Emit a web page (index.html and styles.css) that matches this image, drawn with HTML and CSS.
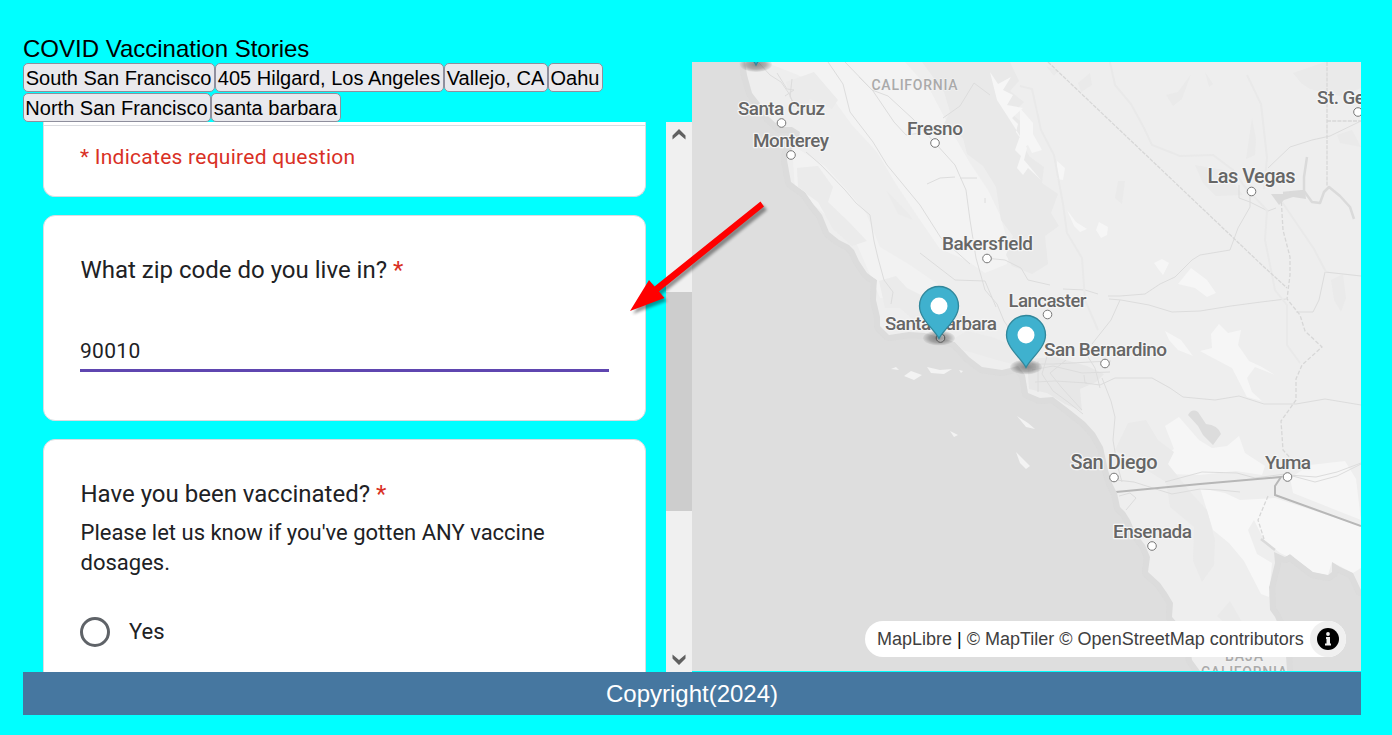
FILE: index.html
```html
<!DOCTYPE html>
<html lang="en">
<head>
<meta charset="utf-8">
<title>COVID Vaccination Stories</title>
<link rel="stylesheet" href="styles.css">
</head>
<body>
<header class="title">COVID Vaccination Stories</header>
<main class="main">
  <section class="left">
    <nav class="places">
      <button class="b1">South San Francisco</button><button class="b2">405 Hilgard, Los Angeles</button><button class="b3">Vallejo, CA</button><button class="b4">Oahu</button><button class="b5">North San Francisco</button><button class="b6">santa barbara</button>
    </nav>
    <div class="frame">
      <div class="form">
        <div class="card intro"><p class="required">* Indicates required question</p></div>
        <div class="card zip">
          <h2 class="question">What zip code do you live in? <span class="star">*</span></h2>
          <div class="answer">90010</div>
        </div>
        <div class="card vaccine">
          <h2 class="question">Have you been vaccinated? <span class="star">*</span></h2>
          <p class="description">Please let us know if you've gotten ANY vaccine dosages.</p>
          <div class="option"><span class="radio"></span><span class="label">Yes</span></div>
        </div>
      </div>
      <div class="scrollbar">
        <svg class="chev" viewBox="0 0 26 26"><path d="M6.500 17.500V13.500L13 7L19.500 13.500V17.500L13 12Z" fill="#606060"/></svg>
        <div class="thumb"></div>
        <svg class="chev" viewBox="0 0 26 26"><path d="M6.500 8.500V12.500L13 19L19.500 12.500V8.500L13 14Z" fill="#606060"/></svg>
      </div>
    </div>
  </section>
  <section class="map">
    <svg class="map-canvas" viewBox="692 62 669 609" width="669" height="609">
      <defs>
        <radialGradient id="shade"><stop offset="0" stop-color="#000" stop-opacity=".42"/><stop offset=".6" stop-color="#000" stop-opacity=".27"/><stop offset="1" stop-color="#000" stop-opacity="0.04"/></radialGradient>
        <path id="land" d="M745 62L747 75L752 93L759 102L769 117L780 127L792 127L800 132L798 143L788 153L787 160L791 182L805 192L814 205L822 215L829 232L839 240L849 245L854 250L859 261L867 273L877 280L876 300L880 317L880 326L889 335L909 332L925 333L955 342L969 357L982 367L1002 370L1018 366L1025 375L1028 393L1040 398L1053 397L1070 410L1085 422L1095 433L1103 447L1108 470L1112 483L1117 493L1120 507L1125 512L1130 520L1135 532L1145 545L1150 557L1148 572L1160 583L1167 593L1173 603L1172 617L1188 635L1192 660L1200 671H1287L1285 640L1275 617L1270 610L1269 587L1275 563L1274 552L1285 557L1290 554L1300 562L1313 572L1328 575L1332 572V562L1340 567L1353 573L1361 590V62Z"/>
        <clipPath id="landclip"><use href="#land"/></clipPath>
        <g id="pin"><ellipse cx="0" cy="0" rx="16" ry="7.500" fill="url(#shade)"/><path d="M0 .5C-4-8-19.500-19-19.500-32A19.500 19.500 0 0 1 19.500-32C19.500-19 4-8 0 .5Z" fill="#3fb1ce" stroke="#31879b" stroke-width="1.300"/><circle cy="-32" r="8.500" fill="#fff"/></g>
      </defs>
      <path fill="#dedede" d="M692 62h669v609H692Z"/>
      <use href="#land" fill="none" stroke="#d9d9d9" stroke-width="12" stroke-linejoin="round" opacity=".5"/>
      <use href="#land" fill="#eee"/>
      <g clip-path="url(#landclip)">
        <path fill="#f3f3f3" d="M765 62H905L930 90L952 132L970 163L988 190L1000 215L1010 250L1007 264L985 273L966 260L940 249L920 220L896 184L877 152L852 125L828 92L798 75Z"/>
        <path fill="#f2f2f2" d="M792 145L825 166L847 190L866 213L880 247L910 265L939 285L920 302L880 298L855 240L820 210L795 190Z"/>
        <path fill="#ebebeb" d="M786 82L814 72L838 100L832 109L810 99L804 113L790 98ZM797 168L818 166L833 187L828 202L849 222L867 241L852 246L833 229L818 202L798 188ZM886 190L909 214L913 220L898 214ZM879 281L896 276L907 288L923 296L941 313L961 314L979 325L960 331L932 317L918 324L900 308L885 308ZM942 345L967 331L992 337L1012 345L1030 360L1015 365L990 358L970 352Z"/>
        <path fill="#e9e9e9" d="M922 62H1010L1019 81L1010 91L1024 102L1012 114L1026 126L1019 139L1030 157L1044 167L1042 183L1058 194L1051 213L1059 226L1045 236L1048 264L1032 274L1012 266L1006 255L1013 236L1001 220L996 187L983 166L967 154L963 138L944 124L950 112L944 92Z"/>
        <path fill="#f6f6f6" d="M990 72L998 84L1011 77L1003 90L1013 95L1007 105L1023 108L1012 118L1018 124L1016 132L1027 148L1024 160L1041 180L1028 168L1023 175L1017 168L1021 156L1015 150L1020 136L1008 117L997 100ZM1020 108L1033 123V134L1042 150L1032 153L1028 145L1020 150ZM1057 161L1065 168L1063 180L1057 179ZM1067 210L1076 222L1087 229L1080 232L1074 226ZM1099 222L1108 227L1107 235L1101 238L1096 230ZM1178 284L1191 268L1207 280L1216 293L1207 297L1195 288ZM1154 263L1162 259L1169 263L1163 275L1159 270ZM1165 331L1181 340L1193 356L1178 350L1169 340Z"/>
        <path fill="#f6f6f6" d="M1211 334L1219 324L1228 333L1241 330L1238 345L1249 361L1262 367L1275 375L1255 367L1247 378L1252 392L1262 401L1247 397L1232 368L1213 358L1200 351L1212 348Z"/>
        <path fill="#f6f6f6" d="M1165 426L1179 417L1199 440L1212 448L1227 446L1239 436L1245 453L1265 466L1262 475L1236 471L1200 475L1168 474L1160 458L1174 449ZM1290 478L1310 465L1345 461L1356 479L1361 520L1293 493Z"/>
        <path fill="#f7f7f7" d="M1200 488L1225 493L1240 500L1275 498L1361 526V568L1353 573L1332 562L1328 575L1313 572L1300 562L1280 553L1264 540L1254 520L1248 530L1257 554L1272 563L1269 597L1261 594L1244 561L1229 543L1213 530Z"/>
        <path fill="#eaeaea" d="M1166 95L1178 92L1191 74L1182 99L1173 106ZM1205 72L1213 84L1209 87ZM1293 73L1325 62H1361V88L1340 96L1310 89L1301 83ZM1246 159L1252 118L1256 139L1255 155ZM1195 165L1224 170L1243 195L1216 196L1203 183ZM1118 181L1125 181L1122 204L1115 198ZM1337 135L1352 130L1361 147L1340 143ZM1331 280L1343 274L1346 298L1341 312L1334 300ZM1128 423L1146 420L1158 440L1174 452L1168 464L1193 495L1207 510L1215 540L1214 565L1202 582L1193 561L1194 527L1170 507L1166 482L1140 466L1115 450ZM1054 76L1046 66L1058 71ZM1078 83L1090 73L1092 85L1081 92ZM1217 616L1230 601L1242 622L1260 630L1262 650L1237 635Z"/>
        <path fill="#e7e7e7" d="M1027 359L1055 357L1087 366L1104 374L1096 382L1080 389L1082 411L1065 404L1047 393L1029 389Z"/>
        <g fill="none" stroke="#dcdcdc" stroke-width="1">
          <path d="M828 62L843 84L850 112L873 142L887 165L920 205L941 238L970 264M845 62L873 91L894 122L906 135L921 133M859 77L872 90L888 96L913 119L936 144L955 165L966 190L970 220L976 258L985 290L997 304L1004 321L1017 340L1026 360M920 253L955 280L985 281L996 307M927 184L940 178L955 177M960 178H977M985 198V203M806 152L821 165L845 190L856 203L870 215L874 241L878 258L884 280L893 292L891 304M985 258L1005 260L1021 268L1028 280L1050 285M1063 289L1085 290L1098 294M1108 296H1120L1145 294L1160 284L1175 277L1192 260L1200 255L1230 250L1238 228L1250 207V195M1109 299L1121 300L1149 305L1172 312L1200 311L1231 306L1261 302L1286 299M1120 300L1111 320L1092 344M1084 375L1085 383L1100 385L1115 378L1126 378H1152L1170 388L1183 397L1215 400L1239 396L1264 404H1296L1325 399L1361 405M1102 378L1111 401L1115 417L1113 440L1117 464L1122 482M1268 168L1290 147L1312 140L1330 136L1361 121M1296 312H1313L1319 300L1325 272L1361 276M1116 480L1134 482L1159 490L1172 494L1200 489L1220 490L1240 492M1165 482L1202 472L1237 473L1255 478L1285 474L1315 482L1337 476L1361 464M1288 475L1316 477L1337 472L1361 463M1119 496L1130 493L1136 498L1126 510M759 63L770 75L781 82L790 95L794 107M777 73L787 89L794 90L785 96M792 79L790 97L801 113M1239 185V198L1250 202L1268 211L1276 208M943 118L960 106L974 83L990 95"/>
          <path d="M1032 364H1054L1090 362L1111 361M1032 370L1053 366L1082 373L1110 372M1035 382L1055 381L1087 383M1048 353L1042 374L1053 391L1068 402L1083 414M1066 360L1050 373L1062 388L1082 410M1085 352L1095 368L1100 388M1038 361V392"/>
        </g>
        <path fill="none" stroke="#e9e9e9" stroke-width="2" d="M1110 62L1115 85L1131 104L1144 128L1152 145L1180 156L1213 155L1233 170L1245 187L1267 210L1265 240L1275 290L1287 305V345L1300 363M1247 75L1261 104L1267 158L1264 189M1020 86L1032 89L1041 130L1054 155L1063 204L1067 233L1082 258L1085 300L1098 330M1280 199L1314 249L1326 272"/>
        <g fill="none" stroke="#d7d7d7" stroke-width="1.300"><path stroke-dasharray="4 1.200" d="M1048 62L1264 267L1287 288M1327 62V186M1327 121H1361"/><path stroke-dasharray="4 2" d="M1281 196L1283 230L1290 257V275L1287 299L1300 315L1305 331L1322 347L1302 365L1296 379V400L1281 421L1283 450L1293 461M1268 496L1258 520L1264 539"/></g>
        <path fill="none" stroke="#dadada" stroke-width="2.500" stroke-linejoin="round" d="M1283 193L1304 191V177L1307 157M1304 191L1312 202L1320 203L1324 192L1329 187L1340 196L1350 207L1354 219M1261 539L1275 550"/>
        <path fill="#dadada" d="M1271 194L1284 194L1305 190L1306 199L1293 197L1284 200L1279 205Z"/>
        <path fill="#dcdcdc" d="M1188 415Q1192 408 1198 412L1206 424Q1218 425 1221 434L1213 445L1203 435L1198 426Z"/>
        <path fill="none" stroke="#b7b7b7" stroke-width="2" d="M1116 492L1200 484L1281 477L1275 486L1275 495L1361 526"/>
      </g>
      <path fill="#f3f3f3" d="M891 369L896 367L899 370ZM904 376L911 371L922 375L914 380ZM927 367L940 370L952 369L944 374L931 373ZM1017 416L1028 423L1035 429L1026 427ZM950 431L958 435L954 437ZM1016 452L1030 466L1026 469L1020 463ZM959 370L963 371L961 373Z"/>
      <g class="cities">
        <text x="738" y="115" textLength="87">Santa Cruz</text><text x="753" y="147" textLength="76">Monterey</text><text x="907" y="135" textLength="56">Fresno</text><text x="942" y="250" textLength="91">Bakersfield</text><text x="1008.500" y="306.500" textLength="78">Lancaster</text><text x="885" y="329.500" textLength="112">Santa Barbara</text><text x="1044" y="355.500" textLength="123">San Bernardino</text><text class="major" x="1070.500" y="468.500" textLength="87">San Diego</text><text x="1113" y="538" textLength="79">Ensenada</text><text x="1265" y="469" textLength="46">Yuma</text><text class="major" x="1207.500" y="183" textLength="88">Las Vegas</text><text x="1317" y="104" textLength="84">St. George</text>
      </g>
      <g class="regions"><text x="871.500" y="90" textLength="86">CALIFORNIA</text><text x="1225" y="661" textLength="38">BAJA</text><text x="1201" y="677" textLength="86">CALIFORNIA</text></g>
      <g fill="#fff" stroke="#777" stroke-width="1"><circle cx="781.500" cy="123" r="4.300"/><circle cx="791" cy="155" r="4.300"/><circle cx="935" cy="143" r="4.300"/><circle cx="987" cy="258.500" r="4.300"/><circle cx="1047.500" cy="314.500" r="4.300"/><circle cx="940.500" cy="338" r="4.300"/><circle cx="1105" cy="363.500" r="4.300"/><circle cx="1114" cy="477.500" r="4.300"/><circle cx="1152" cy="546" r="4.300"/><circle cx="1287.500" cy="477" r="4.300"/><circle cx="1251.500" cy="191.500" r="4.300"/><circle cx="1358" cy="112" r="4.300"/></g>
      <use href="#pin" x="756" y="64.500"/><use href="#pin" x="939" y="338"/><use href="#pin" x="1026" y="367"/>
    </svg>
    <div class="attribution"><span class="credits">MapLibre <b>|</b> © MapTiler © OpenStreetMap contributors</span><span class="info"><svg viewBox="0 0 24 24" width="24" height="24"><circle cx="12" cy="12" r="11" fill="#000"/><circle cx="12" cy="7" r="1.900" fill="#f0f0f0"/><path fill="#f0f0f0" d="M10 10h4v6.500h1V18.500H9V16.500h1.500V12H10Z"/></svg></span></div>
  </section>
</main>
<footer class="footer">Copyright(2024)</footer>
<svg class="arrow" viewBox="620 195 155 130"><path class="arrow-shadow" d="M760 202L764 207L658 292L664 298L630 311L649 281L655 288Z"/><path fill="#f00" d="M760.500 201.500L764 206.500L659 291.500L664.500 298L630 311L649 280L654.500 286.500Z"/></svg>
</body>
</html>
```
FILE: styles.css
```css
* { box-sizing: border-box; }
body { margin: 0; padding: 35px 31px 0 23px; height: 735px; overflow: hidden; background: #0ff; font-family: "Liberation Sans", Arial, sans-serif; }
.title { height: 27px; font-size: 24px; line-height: 27px; white-space: nowrap; }
.main { display: grid; grid-template-columns: 669px 669px; height: 610px; }
.left { display: flex; flex-direction: column; min-width: 0; }
.places { display: flex; flex-wrap: wrap; align-content: flex-start; gap: 1px 0; height: 60px; padding: 1px 80px 0 0; }
.places button { height: 29px; padding: 1px 1px 0 0; border: 1px solid #8f8f9d; border-radius: 5px; background: #e9e9ed; color: #000; font: 20px/26px "Liberation Sans", Arial, sans-serif; white-space: nowrap; }
.b1 { width: 192px; } .b2 { width: 229px; } .b3 { width: 104px; } .b4 { width: 55px; } .b5 { width: 188px; } .b6 { width: 130px; }
.frame { display: flex; height: 550px; overflow: hidden; }
.form { flex: 1; padding: 0 20px; font-family: Roboto, sans-serif; color: #202124; }
.card { background: #fff; border: 1px solid #dadce0; border-radius: 12px; padding: 0 36.5px; margin-bottom: 18px; }
.intro { height: 75px; border-top: 0; border-radius: 0 0 12px 12px; padding: 0; }
.intro::before { content: ""; display: block; height: 3px; border-bottom: 1px solid #dadce0; }
.required { margin: 17px 36px 0; color: #d93025; font-size: 21px; line-height: 29px; letter-spacing: .26px; }
.zip { height: 206px; }
.vaccine { height: 300px; }
.question { margin: 36px 0 0; font-size: 24px; font-weight: 400; line-height: 36px; white-space: nowrap; }
.star { color: #d93025; }
.answer { margin: 44px 0 0 -.5px; height: 40px; border-bottom: 3px solid #5f46b0; font-size: 21px; line-height: 38px; letter-spacing: .3px; }
.description { margin: 6px 0 0; font-size: 22px; line-height: 30px; }
.option { display: flex; align-items: center; gap: 19px; height: 30px; margin: 39px 0 0 -.5px; font-size: 22px; }
.label { padding-bottom: 2px; }
.radio { width: 30px; height: 30px; border: 3px solid #5f6368; border-radius: 50%; }
.scrollbar { display: flex; flex-direction: column; width: 26px; background: #f0f0f0; }
.chev { width: 26px; height: 26px; }
.thumb { height: 219px; margin: 144px 0 135px; background: #cdcdcd; }
.map { position: relative; height: 609px; overflow: hidden; }
.map-canvas { display: block; }
.cities { font: 500 19px Roboto, sans-serif; fill: #666; stroke: #f5f5f5; stroke-width: 2.5px; paint-order: stroke; stroke-linejoin: round; }
.cities .major { font-size: 20px; }
.regions { font: 500 14px Roboto, sans-serif; fill: #aaa; stroke: #f4f4f4; stroke-width: 1px; paint-order: stroke; }
.attribution { position: absolute; right: 15px; bottom: 14px; display: flex; align-items: center; justify-content: space-between; width: 481px; height: 36px; padding-left: 12px; background: #fff; border-radius: 18px; }
.credits { color: #404040; font-size: 18px; white-space: nowrap; }
.credits b { color: #000; font-weight: 400; }
.info { display: flex; align-items: center; justify-content: center; width: 36px; height: 36px; background: #f0f0f0; border-radius: 50%; }
.footer { height: 43px; background: #4677a0; color: #fff; font-size: 24px; line-height: 43px; text-align: center; }
.arrow { position: absolute; left: 620px; top: 195px; width: 155px; height: 130px; pointer-events: none; }
.arrow-shadow { fill: #000; opacity: .4; transform: translate(3px, 3px); filter: blur(1.5px); }
```
